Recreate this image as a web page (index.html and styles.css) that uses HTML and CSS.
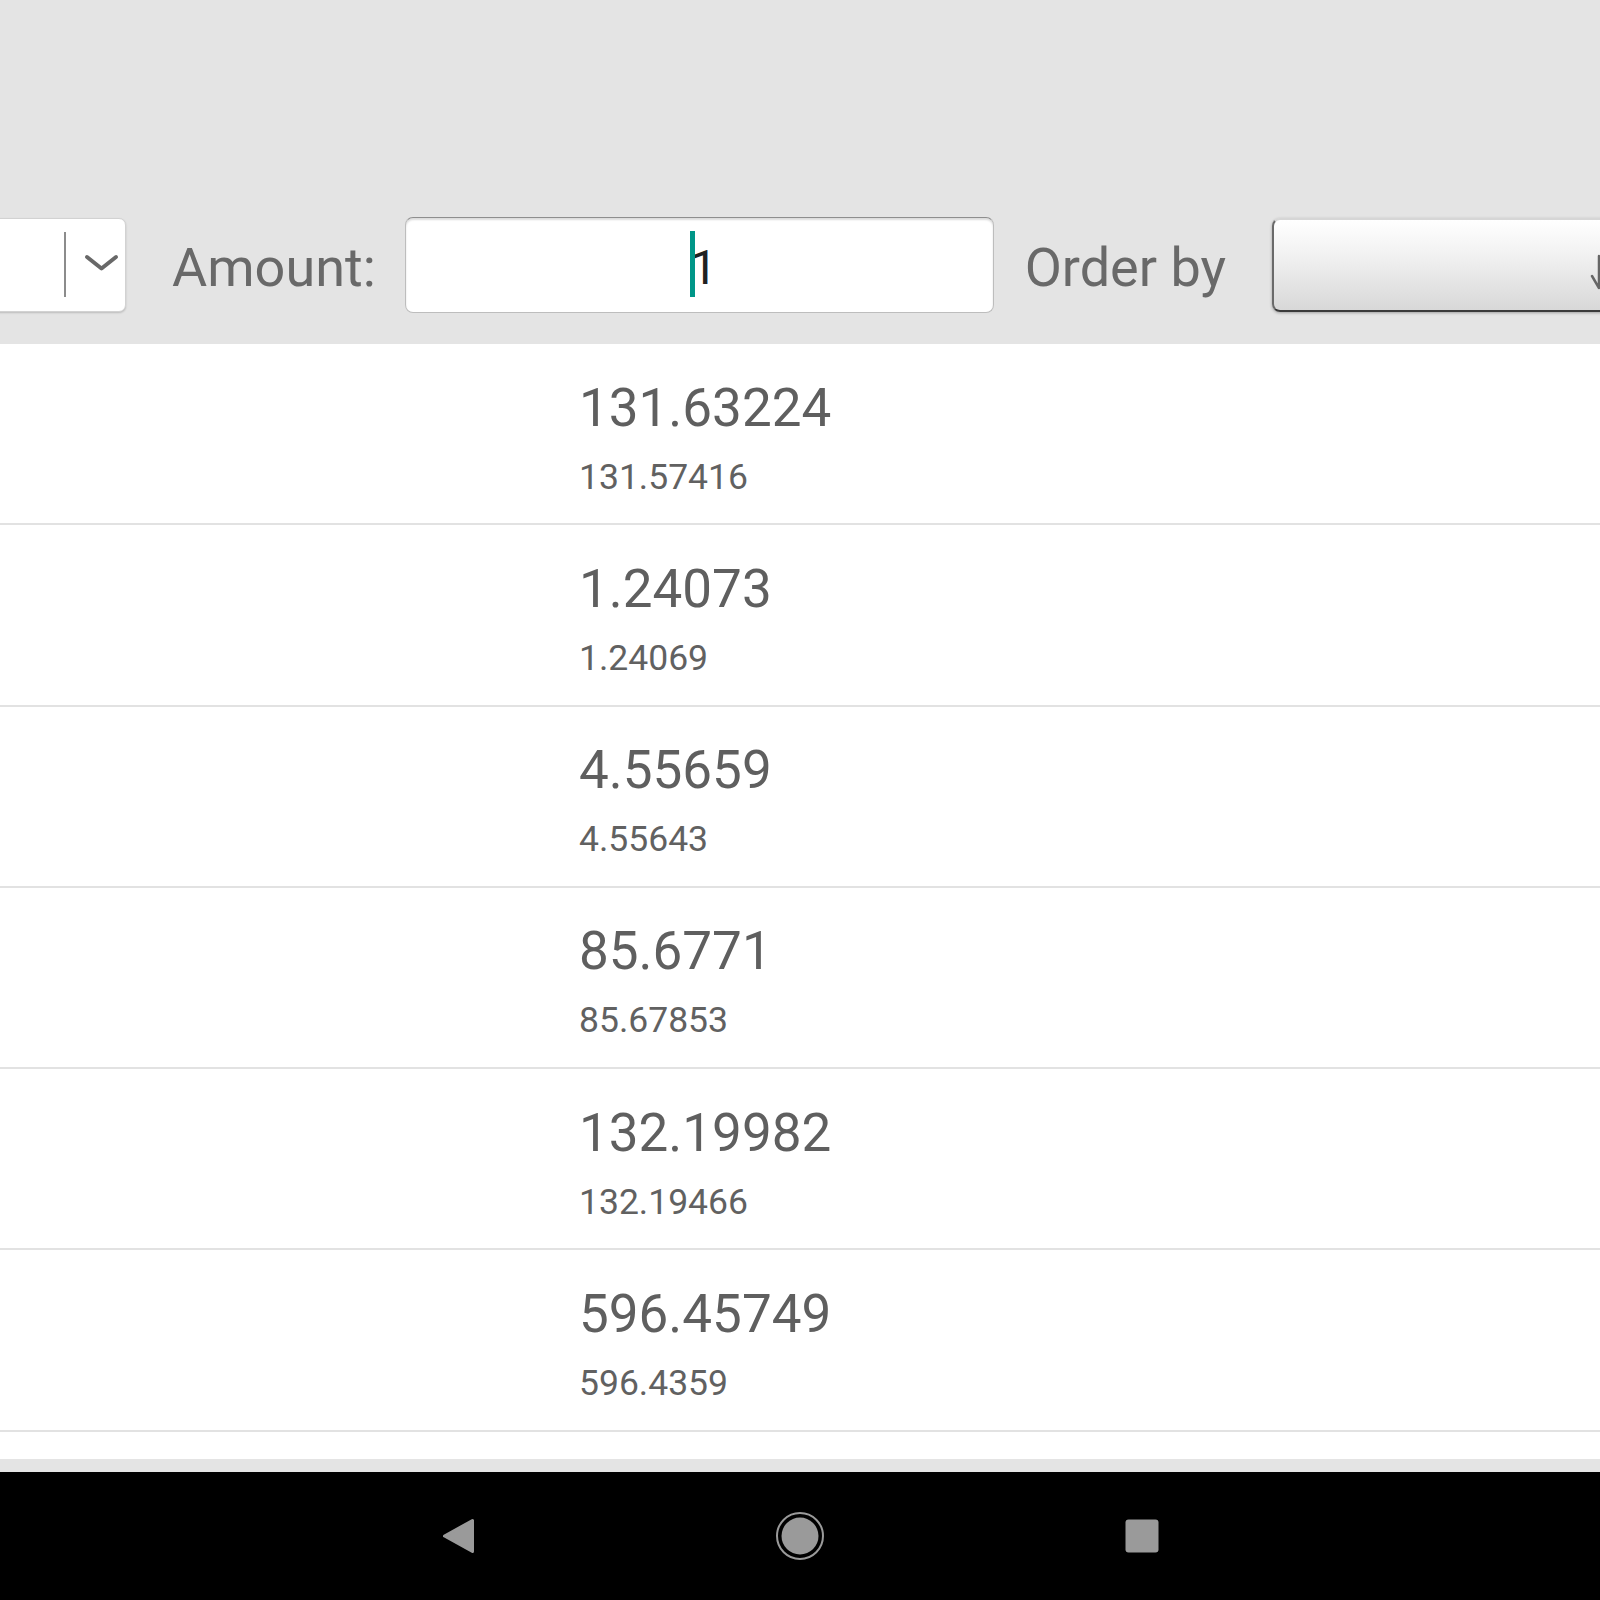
FILE: index.html
```html
<!DOCTYPE html>
<html lang="en">
<head>
<meta charset="utf-8">
<title>Currency list</title>
<link rel="stylesheet" href="styles.css">
</head>
<body>
<div class="screen">
  <header class="header">
    <div class="toolbar">
      <div class="dropdown">
        <span class="dd-sep"></span>
        <svg class="dd-chevron" width="36" height="20" viewBox="0 0 36 20"><path d="M4 4 L18.5 15.5 L33 4" fill="none" stroke="#686868" stroke-width="4" stroke-linecap="round" stroke-linejoin="round"/></svg>
      </div>
      <span class="label label-amount">Amount:</span>
      <div class="amount-input">
        <span class="value"><span class="caret"></span>1</span>
      </div>
      <span class="label label-order">Order by</span>
      <div class="order-btn">
        <svg class="order-arrow" width="20" height="40" viewBox="0 0 20 40"><path d="M10 2 V34 M3 22 L10 34 L17 22" fill="none" stroke="#666" stroke-width="2.5" stroke-linecap="round" stroke-linejoin="round"/></svg>
      </div>
    </div>
  </header>
  <main class="list">
    <div class="row"><div class="big">131.63224</div><div class="small">131.57416</div></div>
    <div class="row"><div class="big">1.24073</div><div class="small">1.24069</div></div>
    <div class="row"><div class="big">4.55659</div><div class="small">4.55643</div></div>
    <div class="row"><div class="big">85.6771</div><div class="small">85.67853</div></div>
    <div class="row"><div class="big">132.19982</div><div class="small">132.19466</div></div>
    <div class="row"><div class="big">596.45749</div><div class="small">596.4359</div></div>
    <div class="row"></div>
  </main>
  <div class="bottom-strip"></div>
  <nav class="navbar">
    <div class="nav-cell">
      <svg width="48" height="48" viewBox="0 0 48 48"><path d="M38.5 8.5 L38.5 39.5 L10.5 24 Z" fill="#9a9a9a" stroke="#9a9a9a" stroke-width="3" stroke-linejoin="round"/></svg>
    </div>
    <div class="nav-cell">
      <svg width="48" height="48" viewBox="0 0 48 48"><circle cx="24" cy="24" r="23" fill="none" stroke="#9a9a9a" stroke-width="2"/><circle cx="24" cy="24" r="18.5" fill="#9a9a9a"/></svg>
    </div>
    <div class="nav-cell">
      <svg width="48" height="48" viewBox="0 0 48 48"><rect x="7.5" y="7.5" width="33" height="33" rx="3" fill="#9a9a9a"/></svg>
    </div>
  </nav>
</div>
</body>
</html>
```

FILE: styles.css
```css
html, body {
  margin: 0;
  padding: 0;
}

body {
  width: 1600px;
  height: 1600px;
  overflow: hidden;
  background: #ffffff;
  font-family: Roboto, "Noto Sans", "Liberation Sans", sans-serif;
}

.screen {
  display: flex;
  flex-direction: column;
  width: 1600px;
  height: 1600px;
  overflow: hidden;
}

/* ---------- header ---------- */
.header {
  flex: none;
  height: 344px;
  background: #e4e4e4;
  overflow: hidden;
}

.toolbar {
  margin-top: 217px;
  height: 95px;
  display: flex;
  align-items: center;
  white-space: nowrap;
}

.dropdown {
  flex: none;
  width: 180px;
  height: 94px;
  margin-left: -54px;
  box-sizing: border-box;
  background: #ffffff;
  border: 1px solid #d2d2d2;
  border-radius: 7px;
  box-shadow: 0 1px 2px rgba(0, 0, 0, 0.18);
  display: flex;
  align-items: center;
  justify-content: flex-end;
}

.dd-sep {
  width: 2px;
  height: 65px;
  background: #8c8c8c;
  margin-right: 17px;
}

.dd-chevron {
  margin-right: 6px;
  margin-top: -4px;
}

.label {
  flex: none;
  font-size: 54px;
  line-height: 54px;
  padding-top: 7px;
  color: #696969;
}

.label-amount {
  margin-left: 46px;
}

.label-order {
  margin-left: 31px;
}

.amount-input {
  flex: none;
  margin-left: 29px;
  width: 589px;
  height: 96px;
  box-sizing: border-box;
  background: #ffffff;
  border: 1.5px solid #bdbdbd;
  border-top-color: #8e8e8e;
  border-radius: 8px;
  box-shadow: inset 0 2px 2px rgba(0, 0, 0, 0.14);
  display: flex;
  align-items: center;
  justify-content: center;
}

.value {
  position: relative;
  font-size: 48px;
  line-height: 48px;
  padding-top: 6px;
  padding-left: 9px;
  color: #212121;
}

.caret {
  position: absolute;
  left: 9px;
  top: -7px;
  width: 5px;
  height: 66px;
  background: #009688;
}

.order-btn {
  flex: none;
  position: relative;
  margin-left: 46px;
  width: 420px;
  height: 94px;
  box-sizing: border-box;
  border-radius: 8px;
  background: linear-gradient(#ffffff, #f1f1f1 40%, #d8d8d8);
  border: 2px solid #3a3a3a;
  border-top-color: #d6d6d6;
  border-left-color: #6a6a6a;
  box-shadow: 0 1px 3px rgba(0, 0, 0, 0.3);
}

.order-arrow {
  position: absolute;
  left: 315px;
  top: 34px;
}

/* ---------- list ---------- */
.list {
  flex: 1;
  background: #ffffff;
  overflow: hidden;
}

.row {
  height: 145.8px;
  padding-top: 33.5px;
  padding-left: 579px;
  border-bottom: 2px solid #e2e2e2;
  color: #5f5f5f;
}

.big {
  font-size: 53px;
  line-height: 60px;
}

.small {
  margin-top: 19px;
  font-size: 35.5px;
  line-height: 40px;
  color: #616161;
}

.bottom-strip {
  flex: none;
  height: 13px;
  background: #e4e4e4;
}

/* ---------- navigation bar ---------- */
.navbar {
  flex: none;
  height: 128px;
  background: #000000;
  display: grid;
  grid-template-columns: repeat(3, 342px);
  justify-content: center;
  align-items: center;
}

.nav-cell {
  display: flex;
  justify-content: center;
  align-items: center;
}

.nav-cell svg {
  display: block;
}
```
